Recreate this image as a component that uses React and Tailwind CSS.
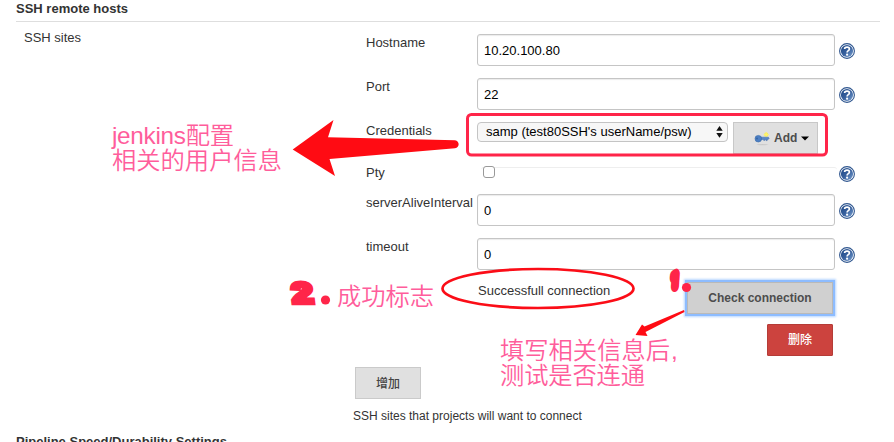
import React from "react";

function HelpIcon() {
  return (
    <svg className="block h-4 w-4 shrink-0" viewBox="0 0 16 16" role="img" aria-label="Help">
      <defs>
        <linearGradient id="help" x1="0" y1="0" x2="1" y2="1">
          <stop offset="0" stopColor="#204a87" />
          <stop offset="0.5" stopColor="#365f9d" />
          <stop offset="1" stopColor="#7da3d3" />
        </linearGradient>
      </defs>
      <circle cx="8" cy="8" r="7.4" fill="#fff" stroke="#2f568f" strokeWidth="1.1" />
      <circle cx="8" cy="8" r="6.1" fill="url(#help)" />
      <path d="M5.6 6C5.7 3.4 10.4 3.4 10.4 6C10.4 7.6 8.1 7.6 8.1 9.4" fill="none" stroke="#fff" strokeWidth="1.7" />
      <circle cx="8.1" cy="11.7" r="1.1" fill="#fff" />
    </svg>
  );
}

function KeyIcon() {
  return (
    <svg className="mr-[4px] block h-4 w-4" viewBox="0 0 16 16" aria-hidden="true">
      <ellipse cx="8.5" cy="14.6" rx="6" ry="0.6" fill="#c9c9c9" />
      <circle cx="12.2" cy="4.6" r="2.2" fill="#f1e96c" />
      <path d="M12.2 2v5M9.7 4.6h5" stroke="#fff36b" strokeWidth="1.2" />
      <path d="M7 7.2H14.4L15.2 8.3L14.2 9.4H13.2V10.6H12V9.5H10.8V10.4H9.7V9.5H7Z" fill="#5b87c7" stroke="#3d6cad" strokeWidth=".5" />
      <circle cx="4.3" cy="8.7" r="3.3" fill="#4d7fc3" stroke="#386aaa" strokeWidth=".6" />
      <circle cx="3" cy="8.6" r="1" fill="#3564a4" />
    </svg>
  );
}

function TextRow({ label, value }) {
  return (
    <div className="flex h-11 items-start">
      <label className="w-[111px] shrink-0 whitespace-nowrap text-[13px] leading-[18px]">{label}</label>
      <input
        className="h-8 w-[358px] rounded-[3px] border border-[#c5c5c5] bg-white px-[6px] text-[13px] text-black shadow-[inset_0_1px_1px_rgba(0,0,0,0.08)] outline-none"
        defaultValue={value}
        aria-label={label}
      />
      <div className="ml-1 mt-[9px]">
        <HelpIcon />
      </div>
    </div>
  );
}

function Annotations() {
  return (
    <svg
      className="pointer-events-none absolute left-0 top-0 h-[442px] w-[894px]"
      viewBox="0 0 894 442"
      fontFamily="'Liberation Sans', 'Noto Sans CJK SC', sans-serif"
    >
      <rect x="467.5" y="114.5" width="359" height="40.5" rx="4" fill="none" stroke="#ff2549" strokeWidth="3" />
      <path d="M292.7 149.5L333.5 120L328 137.3L455 140.2C459.8 141 460 147.5 455 148.2L329.5 159L335 176Z" fill="#ff0b13" />
      <ellipse cx="538" cy="288.5" rx="95.5" ry="19.5" fill="none" stroke="#fb0d17" strokeWidth="2.7" />
      <path d="M684 310L644.5 326.5L642 324.5L635.5 335L647.5 336L645.5 332L684.5 312Z" fill="#ff0b13" />
      <g fill="#ff5d9b" fontSize="24.3" fontWeight="350" fontFamily="'Noto Sans CJK SC', sans-serif">
        <text x="112" y="143.5" textLength="122">
          <tspan fontFamily="'Liberation Sans', sans-serif">jenkins</tspan>配置
        </text>
        <text x="112" y="168.5" textLength="170">相关的用户信息</text>
        <text x="337" y="304.5" textLength="97">成功标志</text>
        <text x="500" y="359" textLength="170">填写相关信息后</text>
        <text x="671" y="359" fontFamily="'Liberation Sans', sans-serif">,</text>
        <text x="500" y="384" textLength="145">测试是否连通</text>
      </g>
      <g fill="#ff2549" stroke="#ff2549" fontWeight="700">
        <text transform="translate(293 302.5) skewX(7) scale(1.3 1)" fontSize="29" strokeWidth="4.5" strokeLinejoin="miter">2</text>
        <circle cx="325.5" cy="300" r="4.6" stroke="none" />
        <text
          transform="translate(672 286) skewX(-4) scale(.6 1)"
          fontSize="16"
          fontFamily="Roboto, sans-serif"
          fontWeight="400"
          strokeWidth="12"
          strokeLinejoin="round"
        >
          1
        </text>
        <circle cx="686.5" cy="287.5" r="4.6" stroke="none" />
      </g>
    </svg>
  );
}

export default function App() {
  return (
    <main className="relative h-[442px] w-[894px] overflow-hidden bg-white font-['Liberation_Sans','Noto_Sans_CJK_SC',sans-serif] text-[13px] text-[#333]">
      <h2 className="ml-4 h-[22px] w-[864px] border-b border-[#dedede] text-[13px] font-bold leading-[18px]">SSH remote hosts</h2>
      <div className="flex pt-[7px]">
        <div className="w-[366px] shrink-0 pl-6 leading-[18px]">SSH sites</div>
        <div className="w-[490px] pt-[5px]">
          <div className="flex flex-col">
            <TextRow label="Hostname" value="10.20.100.80" />
            <TextRow label="Port" value="22" />
            <div className="flex h-[41px] items-start">
              <label className="w-[111px] shrink-0 leading-[18px]">Credentials</label>
              <button className="flex h-5 w-[251px] items-center justify-between rounded-[4px] border border-[#c4c4c4] bg-[#f7f7f7] pl-2 pr-1 text-[13px] text-black">
                <span className="whitespace-nowrap">samp (test80SSH's userName/psw)</span>
                <svg className="h-3 w-[7px]" viewBox="0 0 7 12" aria-hidden="true">
                  <path d="M3.5 0L6.7 4.8H.3ZM.3 7H6.7L3.5 11.8Z" fill="#111" />
                </svg>
              </button>
              <button className="ml-[5px] flex h-8 w-[85px] items-center border border-[#c8c8c8] bg-[#e0e0e0] pl-5 text-[12px] font-bold text-[#4d4d4d]">
                <KeyIcon />
                Add
                <svg className="ml-[4px] h-[5px] w-2" viewBox="0 0 8 5" aria-hidden="true">
                  <path d="M0 .5H8L4 4.5Z" fill="#000" />
                </svg>
              </button>
            </div>
          </div>
          <div className="flex h-[31px] items-start">
            <label className="w-[115px] shrink-0 pt-px leading-[18px]">Pty</label>
            <div className="mt-1 flex h-4 w-[356px] rounded-t-[3px] border-t border-[#eee] pl-[2px]">
              <input type="checkbox" aria-label="Pty" className="-mt-[2px] h-3 w-3 appearance-none rounded-[3px] border border-[#999] bg-white" />
            </div>
            <div className="ml-[2px] mt-[3px]">
              <HelpIcon />
            </div>
          </div>
          <TextRow label="serverAliveInterval" value="0" />
          <TextRow label="timeout" value="0" />
          <div className="flex w-[467px] items-start justify-between pl-[112px]">
            <span className="leading-[18px]">Successfull connection</span>
            <button className="h-8 w-[146px] border border-[#b9b9b9] bg-[#d0d0d0] text-[12px] font-bold text-[#4d4d4d] shadow-[0_0_0_2px_#8dbcff,0_0_2px_3px_#b8d6ff]">
              Check connection
            </button>
          </div>
          <div className="mt-[10px] flex w-[467px] justify-end">
            <button className="h-8 w-[66px] rounded-[1px] border border-[#b53c37] bg-[#cc433e] text-[12px] font-medium text-white">删除</button>
          </div>
          <button className="-ml-[11px] mt-[11px] block h-8 w-[66px] border border-[#cacaca] bg-[#e0e0e0] pt-px text-[12px] font-medium text-[#444]">增加</button>
          <p className="-ml-[13px] mt-[8px] text-[12px] leading-[18px]">SSH sites that projects will want to connect</p>
        </div>
      </div>
      <h2 className="ml-4 mt-[8px] text-[13px] font-bold leading-[18px]">Pipeline Speed/Durability Settings</h2>
      <Annotations />
    </main>
  );
}
